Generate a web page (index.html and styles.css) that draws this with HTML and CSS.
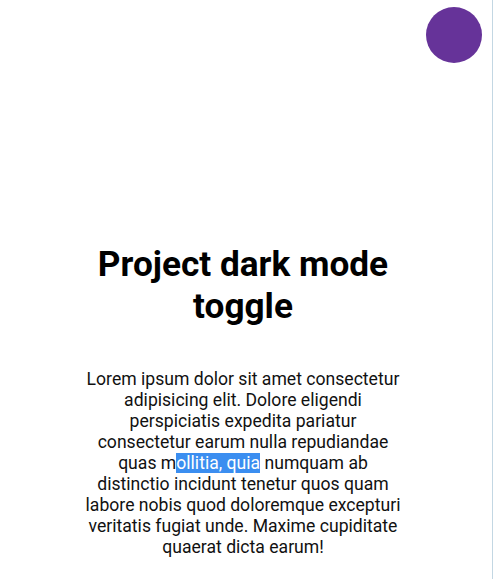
FILE: index.html
```html
<!DOCTYPE html>
<html lang="en">
<head>
<meta charset="utf-8">
<title>Project dark mode toggle</title>
<link rel="stylesheet" href="styles.css">
</head>
<body>
<div class="page">
  <header class="topbar">
    <button class="toggle" aria-label="Toggle dark mode"></button>
  </header>
  <main class="content">
    <h1 class="title">Project dark mode toggle</h1>
    <p class="text">Lorem ipsum dolor sit amet consectetur adipisicing elit. Dolore eligendi perspiciatis expedita pariatur consectetur earum nulla repudiandae quas m<span class="sel">ollitia, quia</span> numquam ab distinctio incidunt tenetur quos quam labore nobis quod doloremque excepturi veritatis fugiat unde. Maxime cupiditate quaerat dicta earum!</p>
  </main>
</div>
</body>
</html>
```

FILE: styles.css
```css
html, body {
  margin: 0;
  padding: 0;
  background: #ffffff;
}

body {
  font-family: Roboto, "Liberation Sans", sans-serif;
  font-size: 17.6px;
  color: #111111;
}

.page {
  min-height: 579px;
  box-sizing: border-box;
  border-right: 1px solid #c3d7e3;
  margin-right: 1px;
  padding-right: 6px;
}

.topbar {
  display: flex;
  justify-content: flex-end;
  padding: 7px 4px 0 0;
}

.toggle {
  width: 56px;
  height: 56px;
  border-radius: 50%;
  border: none;
  padding: 0;
  background: #663399;
}

.content {
  width: 320px;
  margin: 0 auto;
  text-align: center;
  padding-top: 180px;
}

.title {
  font-size: 35.2px;
  font-weight: 700;
  margin: 0 0 42px;
  color: #000000;
}

.text {
  margin: 0;
  line-height: 21px;
}

.sel {
  background: #3b8ef0;
  color: #ffffff;
}
```
